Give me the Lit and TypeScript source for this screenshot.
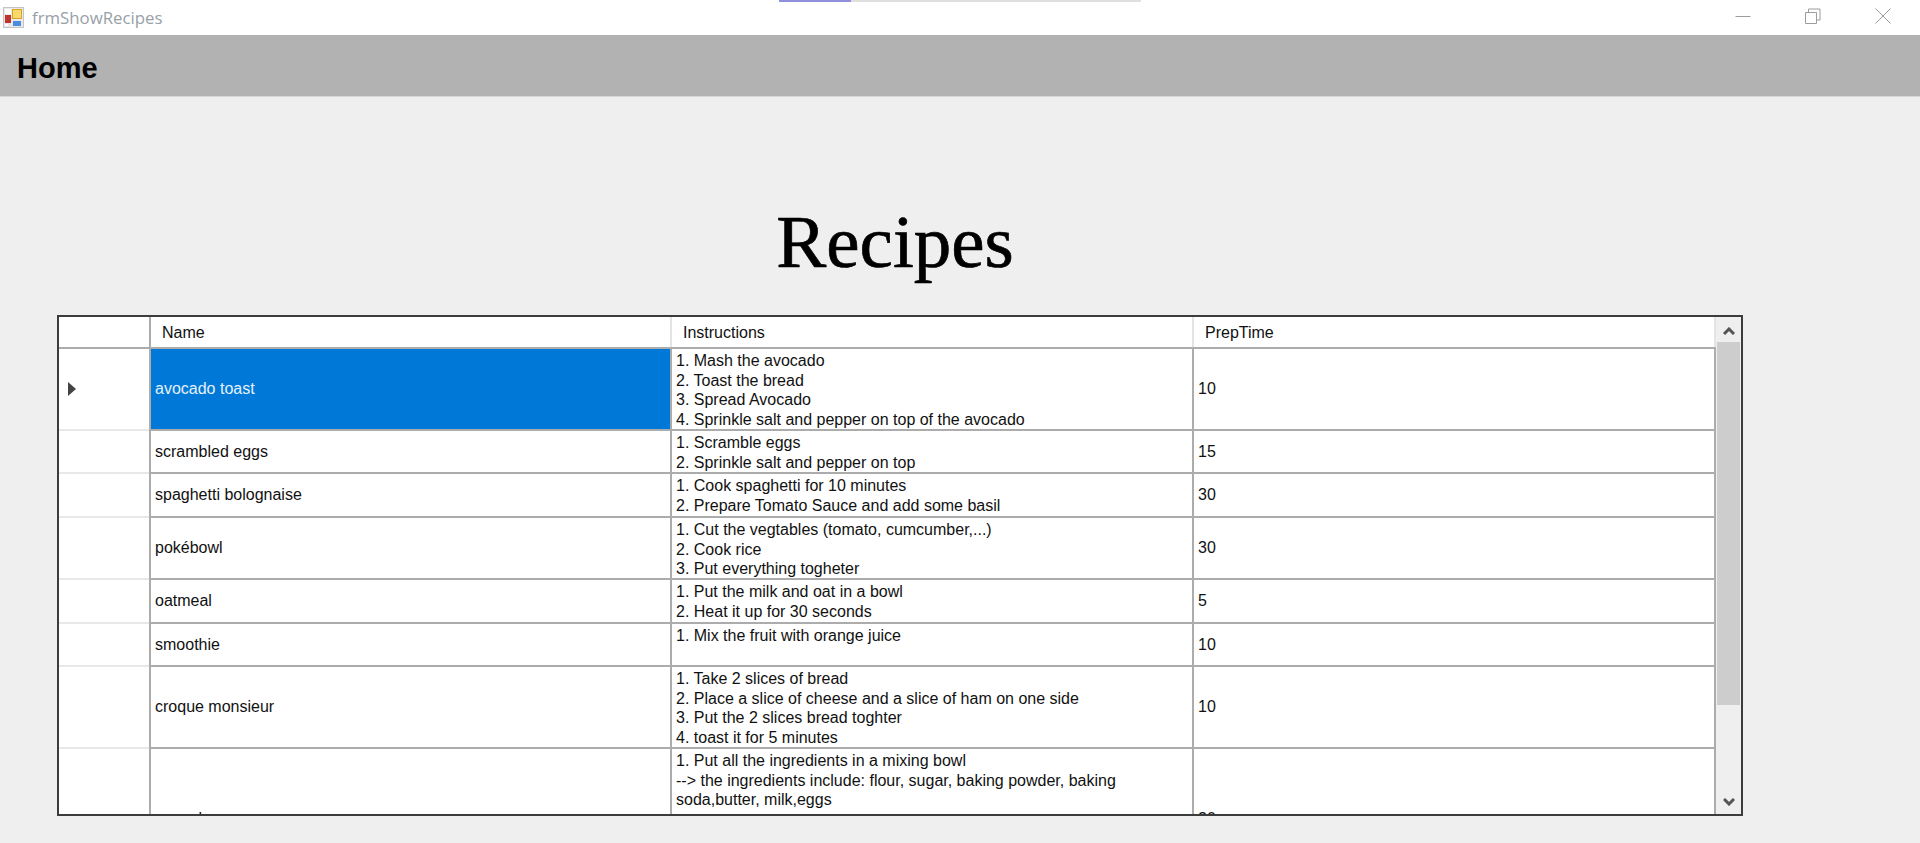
import { LitElement, css, html, svg } from "lit";
import { customElement } from "lit/decorators.js";

interface Recipe {
  name: string;
  lines: string[];
  prep: string;
  height: number;
}

const recipes: Recipe[] = [
  {
    name: "avocado toast",
    lines: ["1. Mash the avocado", "2. Toast the bread", "3. Spread Avocado", "4. Sprinkle salt and pepper on top of the avocado"],
    prep: "10",
    height: 82,
  },
  { name: "scrambled eggs", lines: ["1. Scramble eggs", "2. Sprinkle salt and pepper on top"], prep: "15", height: 43 },
  {
    name: "spaghetti bolognaise",
    lines: ["1. Cook spaghetti for 10 minutes", "2. Prepare Tomato Sauce and add some basil"],
    prep: "30",
    height: 44,
  },
  {
    name: "pokébowl",
    lines: ["1. Cut the vegtables (tomato, cumcumber,...)", "2. Cook rice", "3. Put everything togheter"],
    prep: "30",
    height: 62,
  },
  { name: "oatmeal", lines: ["1. Put the milk and oat in a bowl", "2. Heat it up for 30 seconds"], prep: "5", height: 44 },
  { name: "smoothie", lines: ["1. Mix the fruit with orange juice"], prep: "10", height: 43 },
  {
    name: "croque monsieur",
    lines: [
      "1. Take 2 slices of bread",
      "2. Place a slice of cheese and a slice of ham on one side",
      "3. Put the 2 slices bread toghter",
      "4. toast it for 5 minutes",
    ],
    prep: "10",
    height: 82,
  },
  {
    name: "pancakes",
    lines: [
      "1. Put all the ingredients in a mixing bowl",
      "--> the ingredients include: flour, sugar, baking powder, baking",
      "soda,butter, milk,eggs",
    ],
    prep: "20",
    height: 141,
  },
];

@customElement("app-root")
export class AppRoot extends LitElement {
  static styles = css`
    :host {
      display: flex;
      flex-direction: column;
      position: relative;
      height: 843px;
      overflow: hidden;
      background: #efefef;
      font-family: "Liberation Sans", Arial, sans-serif;
      color: #111;
    }

    .tab-strip {
      position: absolute;
      left: 779px;
      top: 0;
      display: flex;
      height: 2px;
    }
    .tab-on {
      width: 72px;
      background: #8f8fdc;
    }
    .tab-off {
      width: 290px;
      background: #e0e0e0;
    }

    .titlebar {
      flex: none;
      display: flex;
      align-items: center;
      height: 35px;
      background: #fff;
      padding: 0 2px 0 3px;
    }
    .titlebar .caption {
      margin-left: 7px;
      font-family: "Open Sans", sans-serif;
      font-size: 16.8px;
      color: #98a0a8;
      flex: 1;
    }
    .win-btn {
      box-sizing: border-box;
      width: 70px;
      height: 35px;
      padding-bottom: 3px;
      display: flex;
      align-items: center;
      justify-content: center;
    }

    .homebar {
      flex: none;
      box-sizing: border-box;
      height: 62px;
      background: #b2b2b2;
      border-bottom: 1px solid #d6d6d6;
      padding: 17px 0 0 17px;
      font-size: 29px;
      line-height: 33px;
      font-weight: bold;
      color: #000;
    }

    h1 {
      margin: 0;
      padding-top: 120px;
      width: 1790px;
      text-align: center;
      font-family: "Liberation Serif", "Times New Roman", serif;
      font-weight: normal;
      font-size: 75px;
      line-height: 50px;
      height: 50px;
      color: #000;
      -webkit-text-stroke: 0.7px #000;
    }

    .grid {
      box-sizing: border-box;
      margin: 48px 0 0 57px;
      width: 1686px;
      height: 501px;
      display: flex;
      border: 2px solid #3c3c3c;
      background: #fff;
      font-size: 16px;
      line-height: 19.7px;
      overflow: hidden;
    }
    .table {
      width: 1657px;
      flex: none;
      overflow: hidden;
    }
    .row {
      display: grid;
      grid-template-columns: 92px 521px 522px 522px;
      grid-auto-rows: minmax(0, 1fr);
      box-sizing: border-box;
      border-bottom: 2px solid #acacac;
    }
    .row.head {
      height: 32px;
    }
    .cell {
      box-sizing: border-box;
      border-right: 2px solid #acacac;
      padding: 0 4px;
      display: flex;
      align-items: center;
      min-width: 0;
    }
    .row.head .cell {
      padding: 2px 0 0 11px;
      border-right-color: #e4e4e4;
    }
    .row.head .cell:first-child {
      border-right-color: #acacac;
    }
    .cell.marker {
      padding-left: 9px;
      position: relative;
    }
    .cell.marker::after {
      content: "";
      position: absolute;
      left: 0;
      right: 0;
      bottom: -2px;
      height: 2px;
      background: #e8e8e8;
    }
    .cell.selected {
      background: #0078d7;
      color: #e6f1fb;
    }
    .cell.text {
      display: block;
      padding-top: 2px;
      white-space: pre;
    }

    .scroll {
      flex: 1;
      display: flex;
      flex-direction: column;
      background: #efefef;
    }
    .arrow {
      flex: none;
      box-sizing: border-box;
      height: 25px;
      display: flex;
      align-items: center;
      justify-content: center;
    }
    .arrow.up {
      padding-top: 3px;
    }
    .arrow.down {
      padding-top: 1px;
    }
    .thumb {
      flex: none;
      height: 363px;
      background: #cdcdcd;
      margin: 0 1px;
    }
    .track {
      flex: 1;
    }
  `;

  private winButtons() {
    return html`
      <div class="win-btn">
        <svg width="16" height="16" viewBox="0 0 16 16">
          <path d="M0.5 8.5H15.5" stroke="#9c9c9c" stroke-width="1" fill="none" />
        </svg>
      </div>
      <div class="win-btn">
        <svg width="16" height="16" viewBox="0 0 16 16">
          <path d="M0.5 4.5H11.5V15.5H0.5Z M3.5 4V1H15V12H12" stroke="#9c9c9c" stroke-width="1" fill="none" />
        </svg>
      </div>
      <div class="win-btn">
        <svg width="16" height="16" viewBox="0 0 16 16">
          <path d="M0.5 0.5L15.5 15.5M15.5 0.5L0.5 15.5" stroke="#9c9c9c" stroke-width="1" fill="none" />
        </svg>
      </div>
    `;
  }

  private appIcon() {
    return html`<svg width="22" height="22" viewBox="0 0 22 22">
      ${svg`
        <rect x="0.5" y="0.5" width="20" height="20" fill="#e9e9e9" stroke="#c4c4c4" />
        <rect x="2" y="2" width="6" height="5" fill="#fff" />
        <rect x="9.5" y="2.5" width="9" height="9" fill="#f8d970" stroke="#d9a520" />
        <rect x="2" y="8" width="6" height="8" fill="#c0352b" />
        <rect x="10" y="14" width="8" height="5" fill="#4a8be0" />
        <rect x="2" y="17" width="3" height="2" fill="#fff" />
      `}
    </svg>`;
  }

  render() {
    return html`
      <div class="tab-strip"><div class="tab-on"></div><div class="tab-off"></div></div>
      <div class="titlebar">
        ${this.appIcon()}
        <span class="caption">frmShowRecipes</span>
        ${this.winButtons()}
      </div>
      <div class="homebar">Home</div>
      <h1>Recipes</h1>
      <div class="grid">
        <div class="table">
          <div class="row head">
            <div class="cell"></div>
            <div class="cell">Name</div>
            <div class="cell">Instructions</div>
            <div class="cell">PrepTime</div>
          </div>
          ${recipes.map(
            (r, i) => html`
              <div class="row" style="height: ${r.height}px">
                <div class="cell marker">
                  ${i === 0
                    ? html`<svg width="8" height="14" viewBox="0 0 8 14"><path d="M0 0L8 7L0 14Z" fill="#444" /></svg>`
                    : ""}
                </div>
                <div class="cell ${i === 0 ? "selected" : ""}">${r.name}</div>
                <div class="cell text">${r.lines.join("\n")}</div>
                <div class="cell">${r.prep}</div>
              </div>
            `,
          )}
        </div>
        <div class="scroll">
          <div class="arrow up">
            <svg width="12" height="8" viewBox="0 0 12 8"><path d="M1 7L6 2L11 7" stroke="#555" stroke-width="3" fill="none" /></svg>
          </div>
          <div class="thumb"></div>
          <div class="track"></div>
          <div class="arrow down">
            <svg width="12" height="8" viewBox="0 0 12 8"><path d="M1 1L6 6L11 1" stroke="#555" stroke-width="3" fill="none" /></svg>
          </div>
        </div>
      </div>
    `;
  }
}
